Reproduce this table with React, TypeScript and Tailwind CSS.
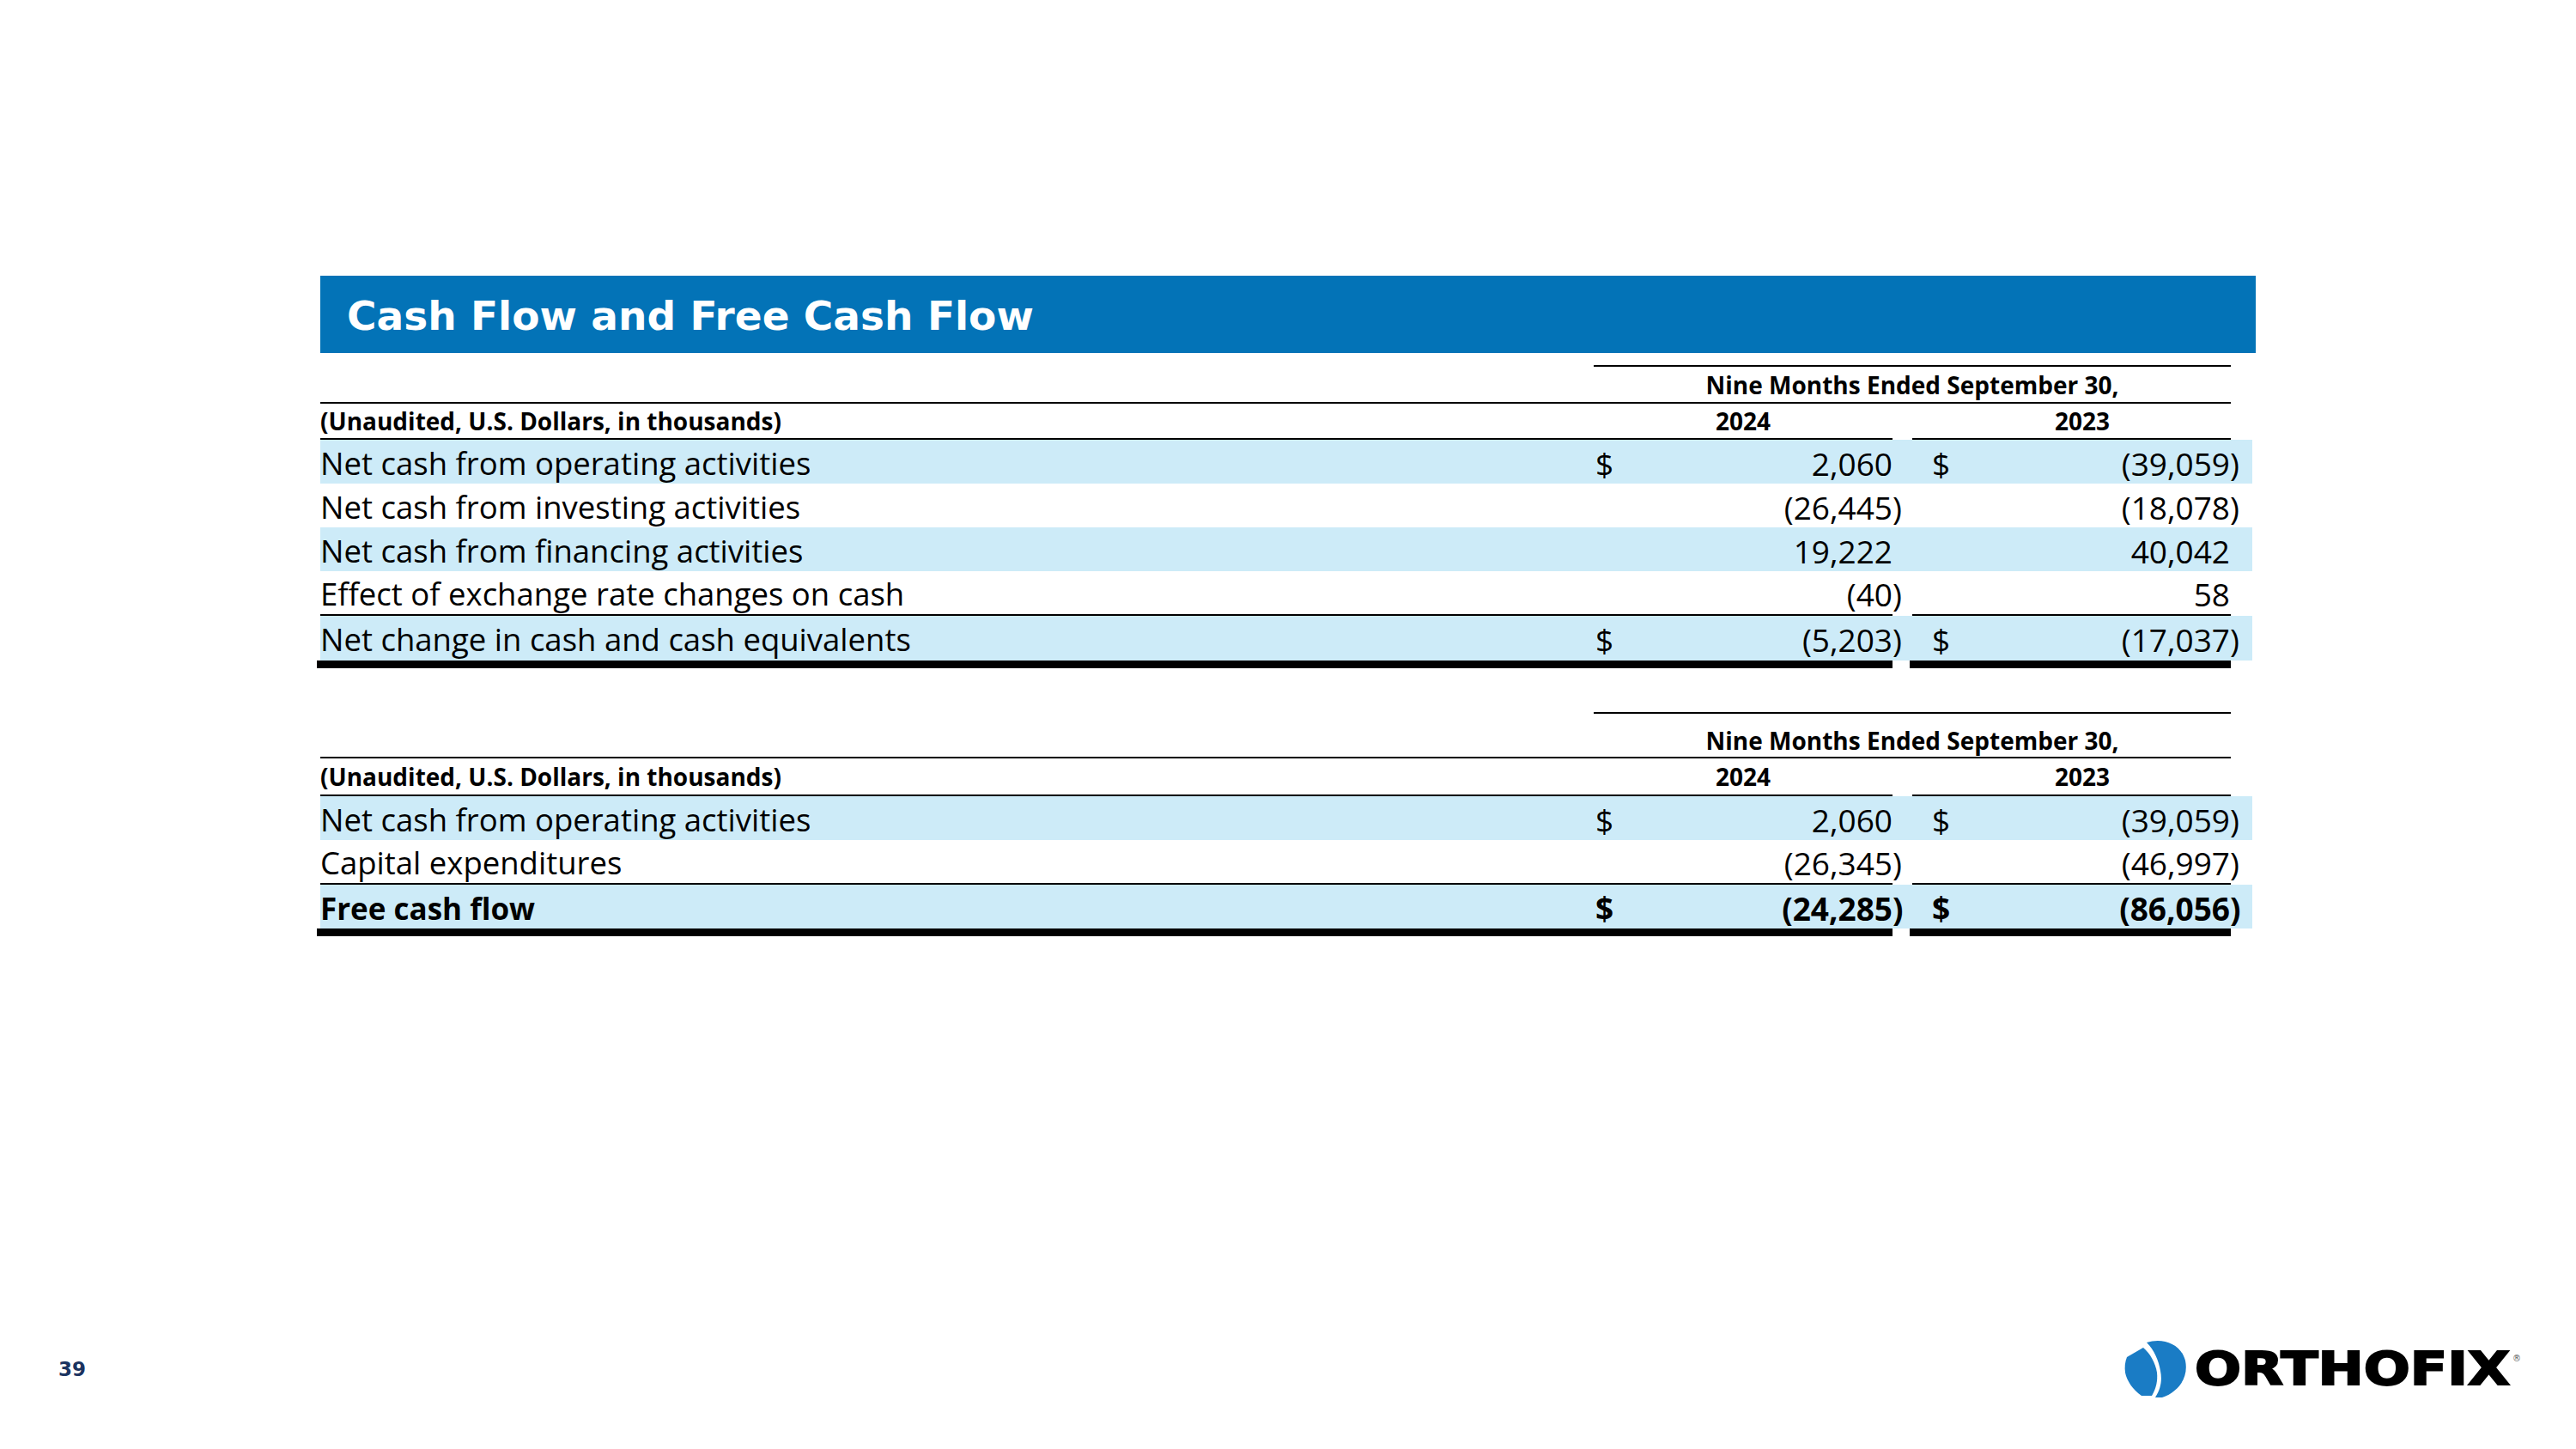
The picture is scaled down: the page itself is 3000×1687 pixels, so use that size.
import React from "react";

const COLS = "grid w-[2250px] grid-cols-[1483px_348px_23px_371px_25px]";

type Cell = { v: string; d?: boolean };

function Val({ v }: { v: string }) {
  const neg = v.endsWith(")");
  return (
    <span className="whitespace-nowrap">
      {neg ? v.slice(0, -1) : v}
      {neg ? <span className="inline-block w-0">)</span> : null}
    </span>
  );
}

function RuleTop() {
  return (
    <div className={`${COLS} h-[2px]`}>
      <div />
      <div className="col-span-3 bg-black" />
      <div />
    </div>
  );
}

function RuleFull() {
  return (
    <div className={`${COLS} h-[2px]`}>
      <div className="col-span-4 bg-black" />
      <div />
    </div>
  );
}

function RuleSplit() {
  return (
    <div className={`${COLS} h-[2px]`}>
      <div className="col-span-2 bg-black" />
      <div />
      <div className="bg-black" />
      <div />
    </div>
  );
}

function Thick() {
  return (
    <div className={`${COLS} h-[9px]`}>
      <div className="col-span-2 -ml-[4px] bg-black" />
      <div />
      <div className="-ml-[3px] bg-black" />
      <div />
    </div>
  );
}

function NineMonths({ tall }: { tall?: boolean }) {
  return (
    <div className={`${COLS} ${tall ? "h-[50px] pt-[12px]" : "h-[41px]"}`}>
      <div />
      <div className="col-span-3 flex items-center justify-center text-[28px] font-bold leading-none text-black">
        Nine Months Ended September 30,
      </div>
      <div />
    </div>
  );
}

function Header({ tall }: { tall?: boolean }) {
  return (
    <div className={`${COLS} ${tall ? "h-[42px]" : "h-[40px]"} text-[28px] font-bold leading-none text-black`}>
      <div className="flex items-center">(Unaudited, U.S. Dollars, in thousands)</div>
      <div className="flex items-center justify-center">2024</div>
      <div />
      <div className="col-span-2 flex items-center justify-center">2023</div>
    </div>
  );
}

function Row({
  label,
  a,
  b,
  blue,
  bold,
  h,
}: {
  label: string;
  a: Cell;
  b: Cell;
  blue?: boolean;
  bold?: boolean;
  h: string;
}) {
  return (
    <div
      className={`${COLS} ${h} ${blue ? "bg-[#cdebf8]" : "bg-white"} ${
        bold ? "font-bold" : "font-normal"
      } leading-none text-black`}
    >
      <div className={`flex items-center pt-[3px] whitespace-nowrap ${bold ? "text-[35px]" : "text-[36.5px]"}`}>
        {label}
      </div>
      <div className="flex items-center justify-between pl-[2px] pt-[3px] text-[37px]">
        <span>{a.d ? "$" : ""}</span>
        <Val v={a.v} />
      </div>
      <div />
      <div className="flex items-center justify-between pl-[23px] pr-[1px] pt-[3px] text-[37px]">
        <span>{b.d ? "$" : ""}</span>
        <Val v={b.v} />
      </div>
      <div />
    </div>
  );
}

function Logo() {
  return (
    <svg width="462" height="72" viewBox="0 0 462 72">
      <path
        d="M3 22 L22 11 C30 18 36 28 38 40 C39 50 37 58 32 67 L20 67 C10 60 3 50 1 40 C0 33 1 27 3 22 Z"
        fill="#1a7cc5"
      />
      <path
        d="M26 5 C44 -1 66 6 71 26 C75 45 64 62 44 69 L36 69 C43 58 44 48 42 38 C40 26 35 14 26 5 Z"
        fill="#1a7cc5"
      />
      <text
        x="82"
        y="54"
        fontFamily="DejaVu Sans, sans-serif"
        fontWeight="bold"
        fontSize="53"
        textLength="367"
        lengthAdjust="spacingAndGlyphs"
        fill="#000"
        stroke="#000"
        strokeWidth="2"
      >
        ORTHOFIX
      </text>
      <text x="452" y="27" fontFamily="DejaVu Sans, sans-serif" fontSize="10" fill="#555">
        ®
      </text>
    </svg>
  );
}

export default function App() {
  return (
    <div className="flex h-[1687px] w-[3000px] flex-col bg-white font-['Open_Sans',sans-serif]">
      <div className="pl-[373px] pt-[321px]">
        <div className="flex h-[90px] w-[2254px] items-center bg-[#0373b7] pl-[31px] pt-[2px]">
          <span className="font-['DejaVu_Sans',sans-serif] text-[47px] font-bold leading-none text-white">
            Cash Flow and Free Cash Flow
          </span>
        </div>

        <div className="mt-[14px]">
          <RuleTop />
          <NineMonths />
          <RuleFull />
          <Header />
          <RuleSplit />
          <Row h="h-[51px]" blue label="Net cash from operating activities" a={{ v: "2,060", d: true }} b={{ v: "(39,059)", d: true }} />
          <Row h="h-[51px]" label="Net cash from investing activities" a={{ v: "(26,445)" }} b={{ v: "(18,078)" }} />
          <Row h="h-[51px]" blue label="Net cash from financing activities" a={{ v: "19,222" }} b={{ v: "40,042" }} />
          <Row h="h-[50px]" label="Effect of exchange rate changes on cash" a={{ v: "(40)" }} b={{ v: "58" }} />
          <RuleSplit />
          <Row h="h-[52px]" blue label="Net change in cash and cash equivalents" a={{ v: "(5,203)", d: true }} b={{ v: "(17,037)", d: true }} />
          <Thick />
        </div>

        <div className="mt-[51px]">
          <RuleTop />
          <NineMonths tall />
          <RuleFull />
          <Header tall />
          <RuleSplit />
          <Row h="h-[51px]" blue label="Net cash from operating activities" a={{ v: "2,060", d: true }} b={{ v: "(39,059)", d: true }} />
          <Row h="h-[50px]" label="Capital expenditures" a={{ v: "(26,345)" }} b={{ v: "(46,997)" }} />
          <RuleSplit />
          <Row h="h-[51px]" blue bold label="Free cash flow" a={{ v: "(24,285)", d: true }} b={{ v: "(86,056)", d: true }} />
          <Thick />
        </div>
      </div>

      <div className="mb-[57px] mt-auto flex h-[72px] items-center justify-between pl-[68px] pr-[64px]">
        <span className="font-['DejaVu_Sans',sans-serif] text-[23px] font-bold leading-none text-[#1b3360]">39</span>
        <Logo />
      </div>
    </div>
  );
}
